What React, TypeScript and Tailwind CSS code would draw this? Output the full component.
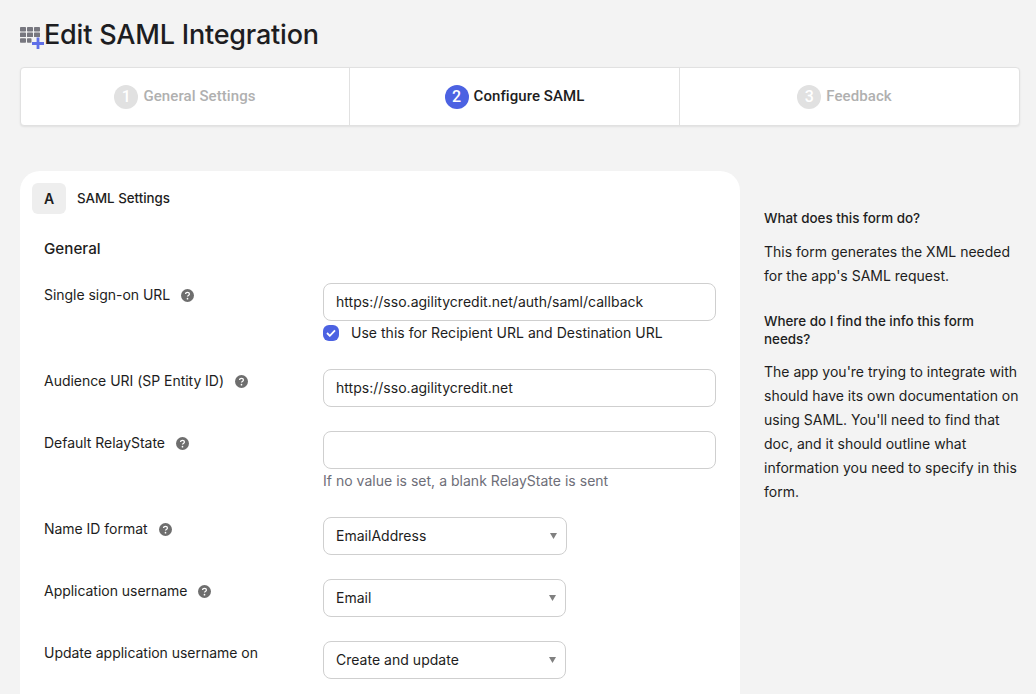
import React from "react";

function Help() {
  return (
    <svg width="13" height="13" viewBox="0 0 13 13" className="shrink-0">
      <circle cx="6.5" cy="6.5" r="6.5" fill="#6e6e6e" />
      <path d="M4.6 5.1c0-1.1.9-1.8 1.9-1.8s1.9.7 1.9 1.7c0 1.4-1.9 1.4-1.9 2.6" fill="none" stroke="#fff" strokeWidth="1.3" />
      <circle cx="6.5" cy="9.7" r=".85" fill="#fff" />
    </svg>
  );
}

function Step({ n, label, active, className }: { n: number; label: string; active?: boolean; className: string }) {
  return (
    <div className={"flex items-center justify-center gap-[5px] font-['Roboto',sans-serif] font-medium text-[15px] tracking-[0.08px] " + className}>
      <span className={"flex items-center justify-center w-6 h-6 rounded-full text-[16px] text-white " + (active ? "bg-[#4c62e2]" : "bg-[#e1e1e1]")}>{n}</span>
      <span className={active ? "text-[#1d1d21]" : "text-[#b0b0b0]"}>{label}</span>
    </div>
  );
}

function Label({ text, help = true }: { text: string; help?: boolean }) {
  return (
    <div className="flex items-center h-[24px] gap-[11px] tracking-[-0.03px]">
      <span>{text}</span>
      {help && <Help />}
    </div>
  );
}

function Box({ value }: { value?: string }) {
  return (
    <div className="h-[38px] rounded-lg border border-[#cfcfcf] bg-white px-3 flex items-center">
      {value}
    </div>
  );
}

function Select({ value, width }: { value: string; width: string }) {
  return (
    <div className={"relative h-[38px] rounded-lg border border-[#cfcfcf] bg-white pl-3 flex items-center " + width}>
      {value}
      <svg width="7" height="6" viewBox="0 0 7 6" className="absolute right-[9px] top-[15px]">
        <path d="M0 0h7L3.5 6z" fill="#808080" />
      </svg>
    </div>
  );
}

export default function App() {
  return (
    <div className="h-[694px] w-[1036px] overflow-hidden bg-[#f3f3f3] font-['Inter',sans-serif] text-[14px] text-[#1d1d21]">
      <div className="px-5 pt-[16px]">
        <div className="flex items-center h-[36px]">
          <svg width="24" height="26" viewBox="0 0 24 26" className="shrink-0 mt-[3px]">
            <g fill="#77777f">
              <rect x="0" y="4" width="6" height="4.500" rx=".7" />
              <rect x="7" y="4" width="6" height="4.500" rx=".7" />
              <rect x="14" y="4" width="6" height="4.500" rx=".7" />
              <rect x="0" y="9.600" width="6" height="4.500" rx=".7" />
              <rect x="7" y="9.600" width="6" height="4.500" rx=".7" />
              <rect x="14" y="9.600" width="6" height="4.500" rx=".7" />
              <rect x="0" y="15.200" width="6" height="4.500" rx=".7" />
              <rect x="7" y="15.200" width="4.500" height="4.500" rx=".7" />
            </g>
            <path d="M18 14.500v11.500M12 20.500h12" stroke="#5f6fe8" strokeWidth="2.800" />
          </svg>
          <h1 className="mt-[2px] text-[27px] font-medium leading-[36px] tracking-[-0.2px] text-[#1d1d21] whitespace-nowrap">Edit SAML Integration</h1>
        </div>

        <div className="mt-[15px] h-[59px] w-[1000px] flex rounded-[4px] border border-[#e1e1e1] bg-white shadow-[0_1px_2px_rgba(0,0,0,0.08)]">
          <Step n={1} label="General Settings" className="w-[329px] border-r border-[#e1e1e1]" />
          <Step n={2} active label="Configure SAML" className="w-[330px] border-r border-[#e1e1e1]" />
          <Step n={3} label="Feedback" className="flex-1 pr-[10px]" />
        </div>

        <div className="mt-[45px] flex">
          <div className="w-[720px] h-[600px] shrink-0 rounded-t-[20px] bg-white pt-3 pl-3">
            <div className="flex items-center gap-[11px]">
              <div className="w-[34px] h-[31px] rounded-[6px] bg-[#eeeeee] flex items-center justify-center font-semibold">A</div>
              <div className="font-medium text-[13.300px]">SAML Settings</div>
            </div>
            <div className="pl-3 pt-[23px]">
              <div className="text-[15.200px] font-medium leading-[24px]">General</div>
              <div className="mt-[22px] grid grid-cols-[279px_393px] text-[14px] leading-[24px] tracking-[0.02px]">
                <Label text="Single sign-on URL" />
                <div className="pb-[24px]">
                  <Box value="https://sso.agilitycredit.net/auth/saml/callback" />
                  <div className="flex items-center gap-[12px] h-[24px]">
                    <span className="w-4 h-4 rounded-[6px] bg-[#4c62e2] flex items-center justify-center">
                      <svg width="10" height="8" viewBox="0 0 10 8"><path d="M1 4l2.800 2.800L9 1.300" fill="none" stroke="#fff" strokeWidth="1.800" /></svg>
                    </span>
                    <span>Use this for Recipient URL and Destination URL</span>
                  </div>
                </div>

                <Label text="Audience URI (SP Entity ID)" />
                <div className="pb-[24px]"><Box value="https://sso.agilitycredit.net" /></div>

                <Label text="Default RelayState" />
                <div className="pb-[24px]">
                  <Box />
                  <div className="h-[24px] text-[#6e6e78]">If no value is set, a blank RelayState is sent</div>
                </div>

                <Label text="Name ID format" />
                <div className="pb-[24px]"><Select value="EmailAddress" width="w-[244px]" /></div>

                <Label text="Application username" />
                <div className="pb-[24px]"><Select value="Email" width="w-[243px]" /></div>

                <Label text="Update application username on" help={false} />
                <div className="pb-[24px]"><Select value="Create and update" width="w-[243px]" /></div>
              </div>
            </div>
          </div>

          <aside className="ml-6 w-[262px] shrink-0 pt-[35px] text-[14px] leading-[24px]">
            <h3 className="font-medium text-[13.400px] leading-[24px]">What does this form do?</h3>
            <p className="mt-[10px]">This form generates the XML needed for the app's SAML request.</p>
            <h3 className="mt-[24px] font-medium text-[13.400px] leading-[18px] w-[230px]">Where do I find the info this form needs?</h3>
            <p className="mt-[12px]">The app you're trying to integrate with should have its own documentation on using SAML. You'll need to find that doc, and it should outline what information you need to specify in this form.</p>
          </aside>
        </div>
      </div>
    </div>
  );
}
